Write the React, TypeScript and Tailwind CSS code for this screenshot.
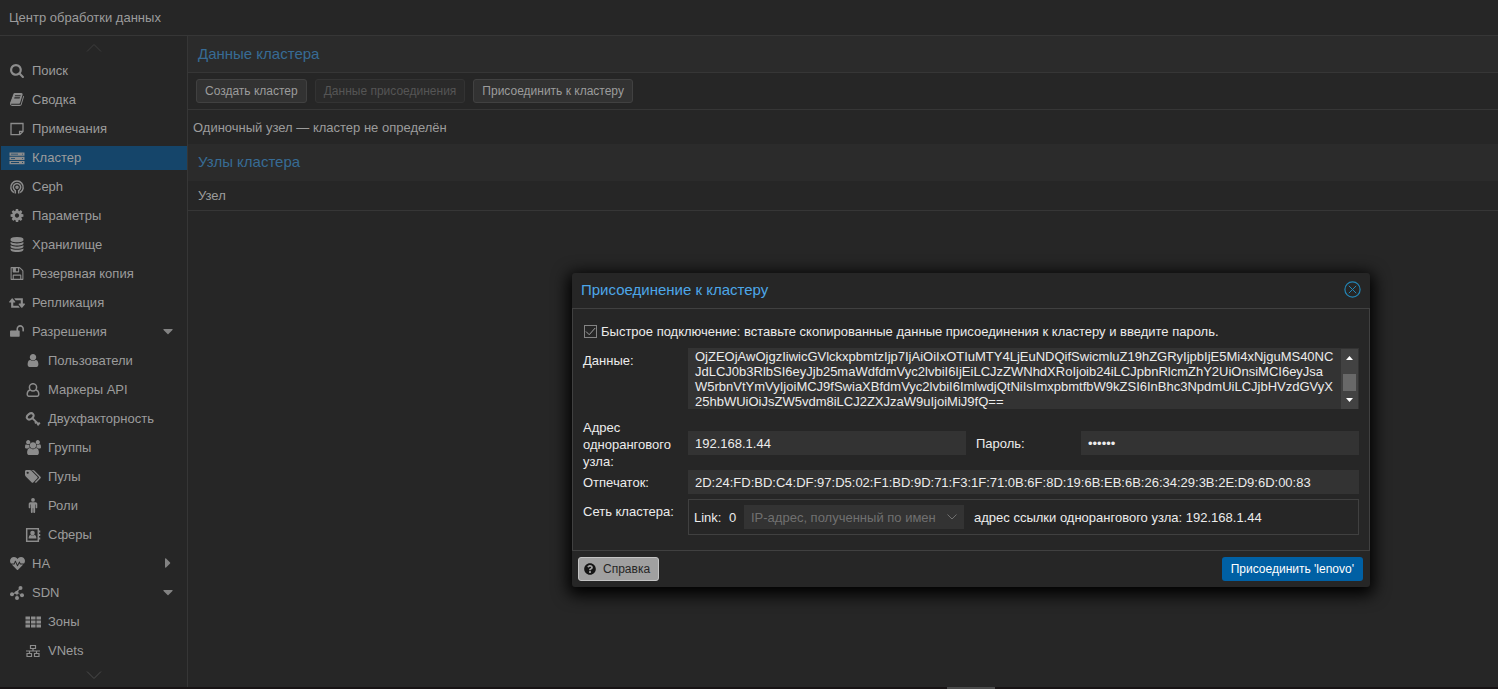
import { useState } from 'react';
import type { ReactNode } from 'react';
import { FaCaretDown, FaCaretRight, FaHeartbeat, FaQuestionCircle } from 'react-icons/fa';

const Glyph = ({ d, box = '0 0 1792 1792' }: { d: string; box?: string }) => (
  <svg viewBox={box} className="h-[15px] w-4" fill="currentColor" aria-hidden="true">
    <path d={d} />
  </svg>
);

const Line = ({ children }: { children: ReactNode }) => (
  <svg viewBox="0 0 16 14" className="h-[14px] w-4" fill="none" stroke="currentColor" strokeWidth="1.5" aria-hidden="true">
    {children}
  </svg>
);

const icons: Record<string, ReactNode> = {
  search: <Glyph d="M1216 832q0-185-131.5-316.5t-316.5-131.5-316.5 131.5-131.5 316.5 131.5 316.5 316.5 131.5 316.5-131.5 131.5-316.5zm512 832q0 52-38 90t-90 38q-54 0-90-38l-343-342q-179 124-399 124-143 0-273.5-55.5t-225-150-150-225-55.5-273.5 55.5-273.5 150-225 225-150 273.5-55.5 273.5 55.5 225 150 150 225 55.5 273.5q0 220-124 399l343 343q37 37 37 90z" />,
  book: <Glyph d="M1703 478q40 57 18 129l-275 906q-19 64-76.5 107.5t-122.5 43.5h-923q-77 0-148.5-53.5t-99.5-131.5q-24-67-2-127 0-4 3-27t4-37q1-8-3-21.5t-3-19.5q2-11 8-21t16.5-23.5 16.5-23.5q23-38 45-91.5t30-91.5q3-10 .5-30t-.5-28q3-11 17-28t17-23q21-36 42-92t25-90q1-9-2.5-32t.5-28q4-13 22-30.5t22-22.5q19-26 42.5-84.5t27.5-96.5q1-8-3-25.5t-2-26.5q2-8 9-18t18-23 17-21q8-12 16.5-30.5t15-35 16-36 19.5-32 26.5-23.5 36-11.5 47.5 5.5l-1 3q38-9 51-9h761q74 0 114 56t18 130l-274 906q-36 119-71.5 153.5t-128.5 34.5h-869q-27 0-38 15-11 16-1 43 24 70 144 70h923q29 0 56-15.5t35-41.5l300-987q7-22 5-57 38 15 59 43zm-1064 2q-4 13 2 22.5t20 9.5h608q13 0 25.5-9.5t16.5-22.5l21-64q4-13-2-22.5t-20-9.5h-608q-13 0-25.5 9.5t-16.5 22.5zm-83 256q-4 13 2 22.5t20 9.5h608q13 0 25.5-9.5t16.5-22.5l21-64q4-13-2-22.5t-20-9.5h-608q-13 0-25.5 9.5t-16.5 22.5z" />,
  note: (
    <Line>
      <path strokeWidth="1.3" d="M2 1.500h12v8l-3.200 3.200H2zM14 9.300h-3.400v3.400" />
    </Line>
  ),
  server: (
    <svg viewBox="0 0 16 14" className="h-[14px] w-4" aria-hidden="true">
      <path fill="currentColor" fillRule="evenodd" d="M.5 1.500h15v3.300H.5zM.5 5.700h15v3.300H.5zM.5 9.900h15v3.300H.5zM2 2.700v.9h7v-.9zM2 6.900v.9h4v-.9zM2 11.100v.9h8v-.9zM13 2.700v.9h1v-.9zM13 6.900v.9h1v-.9zM13 11.100v.9h1v-.9z" />
    </svg>
  ),
  ceph: (
    <Line>
      <path d="M4.800 12.600A6.200 6.200 0 1 1 11.200 12.600M6 10.300A3.700 3.700 0 1 1 10 10.300M6.300 10v3.500M9.700 10v3.500" />
      <circle cx="8" cy="7.200" r="1" />
    </Line>
  ),
  cog: <Glyph d="M1152 896q0-106-75-181t-181-75-181 75-75 181 75 181 181 75 181-75 75-181zm512-109v222q0 12-8 23t-20 13l-185 28q-19 54-39 91 35 50 107 138 10 12 10 25t-9 23q-27 37-99 108t-94 71q-12 0-26-9l-138-108q-44 23-91 38-16 136-29 186-7 28-36 28h-222q-14 0-24.5-8.5t-11.5-21.5l-28-184q-49-16-90-37l-141 107q-10 9-25 9-14 0-25-11-126-114-165-168-7-10-7-23 0-12 8-23 15-21 51-66.5t54-70.5q-27-50-41-99l-183-27q-13-2-21-12.5t-8-23.5v-222q0-12 8-23t19-13l186-28q14-46 39-92-40-57-107-138-10-12-10-24 0-10 9-23 26-36 98.500-107.500t94.500-71.500q13 0 26 10l138 107q44-23 91-38 16-136 29-186 7-28 36-28h222q14 0 24.500 8.500t11.500 21.500l28 184q49 16 90 37l142-107q9-9 24-9 13 0 25 10 129 119 165 170 7 8 7 22 0 12-8 23-15 21-51 66.500t-54 70.500q26 50 41 98l183 28q13 2 21 12.500t8 23.500z" />,
  database: <Glyph d="M896 768q237 0 443-43t325-127v170q0 69-103 128t-280 93.500-385 34.500-385-34.500-280-93.500-103-128v-170q119 84 325 127t443 43zm0 768q237 0 443-43t325-127v170q0 69-103 128t-280 93.500-385 34.500-385-34.500-280-93.500-103-128v-170q119 84 325 127t443 43zm0-384q237 0 443-43t325-127v170q0 69-103 128t-280 93.500-385 34.500-385-34.500-280-93.500-103-128v-170q119 84 325 127t443 43zm0-1152q208 0 385 34.500t280 93.500 103 128v128q0 69-103 128t-280 93.500-385 34.500-385-34.500-280-93.500-103-128v-128q0-69 103-128t280-93.500 385-34.500z" />,
  save: <Glyph d="M512 1536h768v-384h-768v384zm896 0h128v-896q0-14-10-38.500t-20-34.500l-281-281q-10-10-34-20t-39-10v416q0 40-28 68t-68 28h-576q-40 0-68-28t-28-68v-416h-128v1280h128v-416q0-40 28-68t68-28h832q40 0 68 28t28 68v416zm-384-928v-320q0-13-9.500-22.500t-22.500-9.500h-192q-13 0-22.500 9.500t-9.500 22.500v320q0 13 9.500 22.500t22.500 9.500h192q13 0 22.500-9.500t9.500-22.500zm640 32v928q0 40-28 68t-68 28h-1344q-40 0-68-28t-28-68v-1344q0-40 28-68t68-28h928q40 0 88 20t76 48l280 280q28 28 48 76t20 88z" />,
  retweet: <Glyph box="0 0 1920 1792" d="M1280 1504q0 13-9.500 22.500t-22.500 9.500h-960q-8 0-13.500-2t-9-7-5.500-8-3-11.500-1-11.500v-600h-192q-26 0-45-19t-19-45q0-24 15-41l320-384q19-22 49-22t49 22l320 384q15 17 15 41 0 26-19 45t-45 19h-192v384h576q16 0 25 11l160 192q7 10 7 21zm640-416q0 24-15 41l-320 384q-20 23-49 23t-49-23l-320-384q-15-17-15-41 0-26 19-45t45-19h192v-384h-576q-16 0-25-12l-160-192q-7-9-7-20 0-13 9.500-22.500t22.500-9.500h960q8 0 13.500 2t9 7 5.500 8 3 11.500 1 11.500v600h192q26 0 45 19t19 45z" />,
  unlock: <Glyph d="M1728 576v256q0 26-19 45t-45 19h-64q-26 0-45-19t-19-45v-256q0-106-75-181t-181-75-181 75-75 181v192h96q40 0 68 28t28 68v576q0 40-28 68t-68 28h-960q-40 0-68-28t-28-68v-576q0-40 28-68t68-28h672v-192q0-185 131.500-316.500t316.500-131.500 316.500 131.500 131.500 316.500z" />,
  user: <Glyph d="M1536 1399q0 109-62.500 187t-150.500 78h-854q-88 0-150.500-78t-62.500-187q0-85 8.500-160.500t31.500-152 58.500-131 94-89 134.500-34.500q131 128 313 128t313-128q76 0 134.500 34.500t94 89 58.500 131 31.500 152 8.500 160.500zm-256-887q0 159-112.500 271.500t-271.500 112.500-271.500-112.500-112.500-271.500 112.500-271.500 271.500-112.500 271.500 112.500 112.500 271.500z" />,
  userOutline: (
    <Line>
      <circle cx="8" cy="4.300" r="3.600" />
      <path d="M5.200 6.900C2.900 7.300 2.300 9 2.200 11.300 2.200 12.500 3 13.300 4 13.300h8c1 0 1.800-.8 1.800-2 -.1-2.300-.7-4-3-4.400" />
    </Line>
  ),
  key: (
    <Line>
      <ellipse cx="5.200" cy="4.400" rx="3.700" ry="2.600" transform="rotate(-38 5.200 4.400)" strokeWidth="2" />
      <path d="M7.600 6.400L13.900 12.600M10 11.400L12 9.400M12.400 13.200L14.800 10.600" strokeWidth="2" />
    </Line>
  ),
  users: <Glyph box="0 0 1920 1792" d="M593 896q-162 5-265 128h-134q-82 0-138-40.500t-56-118.500q0-353 124-353 6 0 43.500 21t97.500 42.500 119 21.500q67 0 133-23-5 37-5 66 0 159 81 256zm1071 637q0 120-73 189.500t-194 69.500h-874q-121 0-194-69.500t-73-189.500q0-53 3.500-103.500t14-109 26.500-108.500 43-97.500 62-81 85.500-53.500 111.500-20q10 0 43 21.500t73 48 107 48 135 21.500 135-21.500 107-48 73-48 43-21.500q61 0 111.500 20t85.500 53.500 62 81 43 97.500 26.500 108.500 14 109 3.500 103.500zm-1024-1277q0 106-75 181t-181 75-181-75-75-181 75-181 181-75 181 75 75 181zm704 384q0 159-112.500 271.500t-271.500 112.500-271.500-112.500-112.500-271.500 112.500-271.500 271.500-112.500 271.500 112.500 112.500 271.500zm576 225q0 78-56 118.500t-138 40.500h-134q-103-123-265-128 81-117 81-276 0-29-5-66 66 23 133 23 59 0 119-21.500t97.500-42.500 43.500-21q124 0 124 353zm-128-609q0 106-75 181t-181 75-181-75-75-181 75-181 181-75 181 75 75 181z" />,
  tags: <Glyph box="0 0 1920 1792" d="M448 448q0-53-37.500-90.500t-90.500-37.500-90.500 37.500-37.500 90.500 37.500 90.500 90.500 37.500 90.500-37.500 37.500-90.500zm1067 576q0 53-37 90l-491 492q-39 37-91 37-53 0-90-37l-715-716q-38-37-64.500-101t-26.500-117v-416q0-52 38-90t90-38h416q53 0 117 26.500t102 64.500l715 714q37 39 37 91zm384 0q0 53-37 90l-491 492q-39 37-91 37-36 0-59-14t-53-45l470-470q37-37 37-90 0-52-37-91l-715-714q-38-38-102-64.500t-117-26.500h224q53 0 117 26.500t102 64.500l715 714q37 39 37 91z" />,
  male: <Glyph d="M1408 704v416q0 40-28 68t-68 28-68-28-28-68v-352h-64v912q0 46-33 79t-79 33-79-33-33-79v-464h-64v464q0 46-33 79t-79 33-79-33-33-79v-912h-64v352q0 40-28 68t-68 28-68-28-28-68v-416q0-80 56-136t136-56h640q80 0 136 56t56 136zM1120 224a224 224 0 1 1-448 0 224 224 0 1 1 448 0z" />,
  addressBook: (
    <Line>
      <rect x="1.700" y=".7" width="11.600" height="12.600" />
      <path d="M14.500 2.500v2M14.500 6v2M14.500 9.500v2" />
      <path fill="currentColor" stroke="none" d="M7.500 2.800a2.300 2.300 0 1 1 0 4.600 2.300 2.300 0 1 1 0-4.600zM5.600 7q1.900 1.300 3.800 0 2 .4 2 3.600H3.600q0-3.200 2-3.600z" />
    </Line>
  ),
  heart: <FaHeartbeat className="size-[15px]" />,
  sdn: (
    <svg viewBox="0 0 16 14" className="h-[14px] w-4" fill="currentColor" stroke="currentColor" aria-hidden="true">
      <path strokeWidth=".5" d="M3 8.300L8 6.800 11.500 2M8 6.800v5M8 6.800l5 2.500" />
      <g stroke="none">
        <circle cx="3" cy="8.300" r="2" />
        <circle cx="7.800" cy="6.800" r="1.800" />
        <circle cx="11.500" cy="2" r="2" />
        <circle cx="8" cy="12" r="2" />
        <circle cx="13" cy="9.300" r="2" />
      </g>
    </svg>
  ),
  grid: (
    <svg viewBox="0 0 16 14" className="h-[14px] w-4" fill="currentColor" aria-hidden="true">
      <path d="M.5 1.500h4.500v3H.5zM6 1.500h4.500v3H6zM11.500 1.500H16v3h-4.500zM.5 5.500h4.500v3H.5zM6 5.500h4.500v3H6zM11.500 5.500H16v3h-4.500zM.5 9.500h4.500v3H.5zM6 9.500h4.500v3H6zM11.500 9.500H16v3h-4.500z" />
    </svg>
  ),
  network: (
    <Line>
      <path strokeWidth="1.200" d="M5.500 1.500h5v3h-5zM2 9.500h4.500v3H2zM9.500 9.500H14v3H9.500zM8 4.500v2.500M1 7h14M4.500 7v2.500M11.500 7v2.500" />
    </Line>
  ),
};

type NavItem = { label: string; icon: string; child?: boolean; caret?: 'down' | 'right' };

const navItems: NavItem[] = [
  { label: 'Поиск', icon: 'search' },
  { label: 'Сводка', icon: 'book' },
  { label: 'Примечания', icon: 'note' },
  { label: 'Кластер', icon: 'server' },
  { label: 'Ceph', icon: 'ceph' },
  { label: 'Параметры', icon: 'cog' },
  { label: 'Хранилище', icon: 'database' },
  { label: 'Резервная копия', icon: 'save' },
  { label: 'Репликация', icon: 'retweet' },
  { label: 'Разрешения', icon: 'unlock', caret: 'down' },
  { label: 'Пользователи', icon: 'user', child: true },
  { label: 'Маркеры API', icon: 'userOutline', child: true },
  { label: 'Двухфакторность', icon: 'key', child: true },
  { label: 'Группы', icon: 'users', child: true },
  { label: 'Пулы', icon: 'tags', child: true },
  { label: 'Роли', icon: 'male', child: true },
  { label: 'Сферы', icon: 'addressBook', child: true },
  { label: 'HA', icon: 'heart', caret: 'right' },
  { label: 'SDN', icon: 'sdn', caret: 'down' },
  { label: 'Зоны', icon: 'grid', child: true },
  { label: 'VNets', icon: 'network', child: true },
];

const joinInfo = [
  'OjZEOjAwOjgzIiwicGVlckxpbmtzIjp7IjAiOiIxOTIuMTY4LjEuNDQifSwicmluZ19hZGRyIjpbIjE5Mi4xNjguMS40NC',
  'JdLCJ0b3RlbSI6eyJjb25maWdfdmVyc2lvbiI6IjEiLCJzZWNhdXRoIjoib24iLCJpbnRlcmZhY2UiOnsiMCI6eyJsa',
  'W5rbnVtYmVyIjoiMCJ9fSwiaXBfdmVyc2lvbiI6ImlwdjQtNiIsImxpbmtfbW9kZSI6InBhc3NpdmUiLCJjbHVzdGVyX',
  '25hbWUiOiJsZW5vdm8iLCJ2ZXJzaW9uIjoiMiJ9fQ==',
].join('\n');

function Sidebar() {
  const [active, setActive] = useState('Кластер');

  return (
    <nav className="flex w-[188px] shrink-0 flex-col border-r border-[#363636] pl-px">
      <svg viewBox="0 0 16 8" className="mx-auto mt-2 mb-[7px] h-2 w-4 shrink-0" fill="none" stroke="#3c3c3c" aria-hidden="true">
        <path d="M1 7.500L8 .5l7 7" />
      </svg>
      <ul className="flex flex-col gap-[5px]">
        {navItems.map((item) => (
          <li key={item.label}>
            <button
              type="button"
              onClick={() => setActive(item.label)}
              className={`flex h-6 w-full items-center gap-[7px] pr-[11px] pb-[2px] text-left ${item.child ? 'pl-6' : 'pl-2'} ${active === item.label ? 'bg-[#15456a]' : ''}`}
            >
              <span className="flex w-4 shrink-0 justify-center pt-px text-[#8c8c8c]">{icons[item.icon]}</span>
              <span className="grow">{item.label}</span>
              {item.caret === 'down' && <FaCaretDown className="size-4 text-[#828282]" />}
              {item.caret === 'right' && <FaCaretRight className="size-4 text-[#828282]" />}
            </button>
          </li>
        ))}
      </ul>
      <svg viewBox="0 0 16 8" className="mx-auto mt-2 h-2 w-4 shrink-0" fill="none" stroke="#4a4a4a" aria-hidden="true">
        <path d="M1 .5l7 7 7-7" />
      </svg>
    </nav>
  );
}

function ClusterPanel() {
  return (
    <main className="min-w-0 grow">
      <h2 className="flex h-9 items-center bg-[#2b2b2b] px-[10px] pb-[2px] text-[15px] text-[#376b95]">Данные кластера</h2>
      <div className="flex h-[38px] items-center gap-2 border-y border-[#363636] px-2 text-xs">
        <button type="button" className="h-6 rounded-[3px] border border-[#414141] bg-[#323232] px-2">Создать кластер</button>
        <button type="button" disabled className="h-6 rounded-[3px] border border-[#333333] bg-[#2a2a2a] px-2 text-[#555555]">Данные присоединения</button>
        <button type="button" className="h-6 rounded-[3px] border border-[#414141] bg-[#323232] px-2">Присоединить к кластеру</button>
      </div>
      <p className="flex h-[34px] items-center px-[5px]">Одиночный узел — кластер не определён</p>
      <h2 className="flex h-[37px] items-center bg-[#2b2b2b] px-[10px] pb-[2px] text-[15px] text-[#376b95]">Узлы кластера</h2>
      <table className="w-full">
        <thead>
          <tr className="h-[29px] border-b border-[#363636]">
            <th className="px-[10px] text-left font-normal">Узел</th>
          </tr>
        </thead>
      </table>
    </main>
  );
}

function JoinWindow() {
  const [assisted, setAssisted] = useState(true);
  const field = 'h-6 min-w-0 bg-[#333333] px-[7px] outline-none';

  return (
    <section
      role="dialog"
      aria-labelledby="join-title"
      className="absolute top-[273px] left-[572px] w-[798px] rounded-[3px] bg-[#262626] text-[#ececec] shadow-[0_4px_16px_4px_#000000]"
    >
      <header className="flex h-[35px] items-center justify-between pr-[9px] pb-[2px] pl-[9px]">
        <h2 id="join-title" className="text-[15px] text-[#4da6e8]">Присоединение к кластеру</h2>
        <button type="button" aria-label="Закрыть">
          <svg viewBox="0 0 17 17" className="size-[17px]" fill="none" stroke="#2385b5" aria-hidden="true">
            <circle cx="8.500" cy="8.500" r="7.600" strokeWidth="1.200" />
            <path d="M4.800 4.800l7.400 7.400M12.200 4.800l-7.400 7.400" />
          </svg>
        </button>
      </header>

      <form className="border border-[#404040] px-[10px] pt-[10px] pb-[15px]">
        <label className="flex h-6 items-center gap-1">
          <span className="grid">
            <input
              type="checkbox"
              checked={assisted}
              onChange={(e) => setAssisted(e.target.checked)}
              className="col-start-1 row-start-1 ml-px size-[13px] appearance-none border border-[#848484]"
            />
            {assisted && (
              <svg viewBox="0 0 13 13" className="pointer-events-none col-start-1 row-start-1 ml-px size-[13px]" fill="none" stroke="#a0a0a0" aria-hidden="true">
                <path d="M2 6.500l3.200 3.200 6-6.700" />
              </svg>
            )}
          </span>
          Быстрое подключение: вставьте скопированные данные присоединения к кластеру и введите пароль.
        </label>

        <div className="mt-[5px] flex">
          <label htmlFor="join-info" className="w-[105px] shrink-0 pt-1">Данные:</label>
          <div className="flex h-[61px] grow bg-[#333333] pt-px pr-px">
            <textarea
              id="join-info"
              defaultValue={joinInfo}
              spellCheck={false}
              className="grow resize-none overflow-hidden pl-[7px] leading-[15px] whitespace-pre outline-none"
            />
            <div className="flex w-[17px] flex-col items-center justify-between bg-[#424242] pt-[7px] pb-[7px]">
              <svg viewBox="0 0 7 4" className="h-1 w-[7px]" fill="#ffffff" aria-hidden="true">
                <path d="M3.500 0L7 4H0z" />
              </svg>
              <span className="mt-[6px] h-[17px] w-[13px] bg-[#686868]" />
              <svg viewBox="0 0 7 4" className="h-1 w-[7px]" fill="#ffffff" aria-hidden="true">
                <path d="M3.500 4L7 0H0z" />
              </svg>
            </div>
          </div>
        </div>

        <div className="mt-[10px] flex h-[51px] items-center">
          <label htmlFor="join-peer" className="w-[105px] shrink-0">Адрес однорангового узла:</label>
          <div className="mb-[3px] flex grow items-center">
            <input id="join-peer" defaultValue="192.168.1.44" className={`${field} flex-1`} />
            <label htmlFor="join-password" className="ml-[10px] w-[105px] shrink-0">Пароль:</label>
            <input id="join-password" type="password" defaultValue="secret" className={`${field} flex-1`} />
          </div>
        </div>

        <div className="flex items-center">
          <label htmlFor="join-fingerprint" className="w-[105px] shrink-0">Отпечаток:</label>
          <input
            id="join-fingerprint"
            defaultValue="2D:24:FD:BD:C4:DF:97:D5:02:F1:BD:9D:71:F3:1F:71:0B:6F:8D:19:6B:EB:6B:26:34:29:3B:2E:D9:6D:00:83"
            className={`${field} grow`}
          />
        </div>

        <div className="mt-[5px] flex">
          <label htmlFor="join-link" className="w-[105px] shrink-0 pt-1">Сеть кластера:</label>
          <div className="flex h-9 grow items-center border border-[#404040] px-[5px]">
            <span className="w-[35px]">Link:</span>
            <span className="w-[15px]">0</span>
            <div className="grid w-[220px]">
              <select id="join-link" className="col-start-1 row-start-1 h-6 appearance-none bg-[#333333] pr-6 pl-[7px] text-[#707070] outline-none">
                <option>IP-адрес, полученный по имен</option>
              </select>
              <svg viewBox="0 0 10 6" className="pointer-events-none col-start-1 row-start-1 mr-[7px] h-[6px] w-[10px] self-center justify-self-end" fill="none" stroke="#707070" aria-hidden="true">
                <path d="M.5 .5L5 5 9.500 .5" />
              </svg>
            </div>
            <span className="ml-[10px]">адрес ссылки однорангового узла: 192.168.1.44</span>
          </div>
        </div>
      </form>

      <footer className="flex h-9 items-center justify-between pr-[7px] pl-[6px] text-xs">
        <button type="button" className="flex h-6 items-center gap-[7px] rounded-[3px] border border-[#c4c4c4] bg-[#a0a0a0] pr-2 pl-[5px] text-[#262626]">
          <FaQuestionCircle className="size-3 text-[#141414]" />
          Справка
        </button>
        <button type="button" className="h-6 rounded-[3px] bg-[#0060a4] px-[9px] text-[#ffffff]">Присоединить 'lenovo'</button>
      </footer>
    </section>
  );
}

export default function App() {
  return (
    <div className="relative flex min-h-screen flex-col bg-[#262626] font-['Liberation_Sans',Arial,sans-serif] text-[13px] leading-[17px] text-[#9c9c9c]">
      <header className="flex h-9 shrink-0 items-center border-b border-[#363636] px-[9px]">
        <h1>Центр обработки данных</h1>
      </header>
      <div className="flex grow">
        <Sidebar />
        <ClusterPanel />
      </div>
      <div className="flex h-[2px] shrink-0 justify-center bg-[#171314]">
        <span className="ml-[444px] w-12 bg-[#4b4b4b]" />
      </div>
      <JoinWindow />
    </div>
  );
}
